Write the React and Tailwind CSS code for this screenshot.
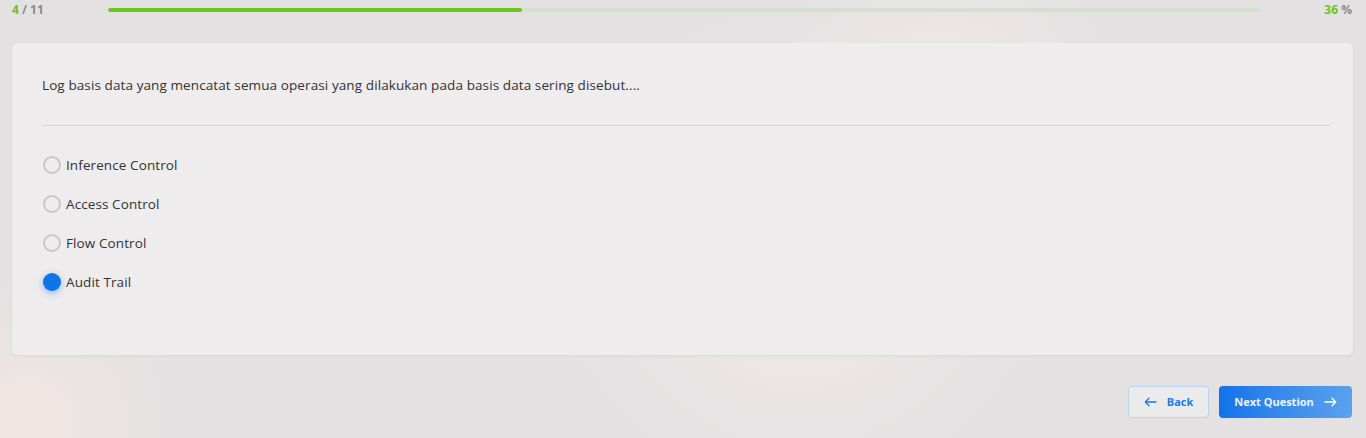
import React from "react";

const options = ["Inference Control", "Access Control", "Flow Control", "Audit Trail"];

export default function App() {
  return (
    <div
      className="w-[1366px] h-[438px] overflow-hidden bg-[#e3e1e2] text-[#333] relative"
      style={{ fontFamily: "'Open Sans', Lato, sans-serif" }}
    >
      <div className="pointer-events-none absolute inset-0 bg-[radial-gradient(circle_at_800px_250px,#f3e9e9_0,transparent_260px),radial-gradient(circle_at_950px_110px,#f2e8e8_0,transparent_180px),radial-gradient(circle_at_30px_420px,#f1e6e4_0,transparent_150px)]" />
      <div className="relative">
        <div className="flex items-center h-[19px] pl-3 pr-[14px] text-[12px] font-bold">
          <div className="w-[96px]">
            <span className="text-[#6cc51e]">4</span>
            <span className="text-[#8a8a8a]"> / 11</span>
          </div>
          <div className="flex-1 h-[4px] rounded-full bg-[#d5dfcb] overflow-hidden">
            <div className="h-full rounded-full bg-[#6cc51e] w-[36%]" />
          </div>
          <div className="w-[93px] text-right text-[12px]">
            <span className="text-[#6cc51e]">36</span>
            <span className="text-[#8a8a8a]"> %</span>
          </div>
        </div>

        <div className="ml-3 mr-[13px] mt-[24px] h-[312px] rounded-md bg-[#eeeced]/95 shadow-[0_1px_3px_rgba(0,0,0,0.06)] px-[30px] pt-[33px]">
          <p className="text-[13.5px] leading-[18px] text-[#333] tracking-[0.1px]">
            Log basis data yang mencatat semua operasi yang dilakukan pada basis data sering disebut....
          </p>
          <div className="mt-[31px] mr-[-7px] h-px bg-[#d6d4d5]" />
          <div className="mt-[30px] flex flex-col gap-[21px]">
            {options.map((o, i) => {
              const sel = i === 3;
              return (
                <label key={o} className="flex items-center h-[18px] gap-[5px] text-[13.5px] text-[#333] tracking-[0.1px]">
                  <span
                    className={
                      sel
                        ? "ml-[1px] w-[18px] h-[18px] rounded-full bg-[#0f73ea] shadow-[0_2px_6px_rgba(15,115,234,0.45)]"
                        : "ml-[1px] w-[18px] h-[18px] rounded-full border-2 border-[#c8c6c7] bg-transparent"
                    }
                  />
                  <span>{o}</span>
                </label>
              );
            })}
          </div>
        </div>

        <div className="flex justify-end gap-[10px] mx-[14px] mt-[31px]">
          <button className="w-[81px] h-[32px] rounded border border-[#b8d4f2] bg-[#ecebec] text-[#1a7ae8] text-[11px] font-bold flex items-center justify-center gap-[10px]">
            <svg width="13" height="10" viewBox="0 0 13 10" fill="none" stroke="#1a7ae8" strokeWidth="1.3" strokeLinecap="round" strokeLinejoin="round">
              <path d="M12 5H1.5M5 1.2L1.3 5L5 8.8" />
            </svg>
            Back
          </button>
          <button className="w-[133px] h-[32px] rounded bg-gradient-to-r from-[#0f73ea] to-[#5aa2ec] text-white/90 text-[11px] font-bold flex items-center justify-center gap-[10px]">
            Next Question
            <svg width="13" height="10" viewBox="0 0 13 10" fill="none" stroke="white" strokeWidth="1.3" strokeLinecap="round" strokeLinejoin="round">
              <path d="M1 5h10.5M8 1.2L11.7 5L8 8.8" />
            </svg>
          </button>
        </div>
      </div>
    </div>
  );
}
